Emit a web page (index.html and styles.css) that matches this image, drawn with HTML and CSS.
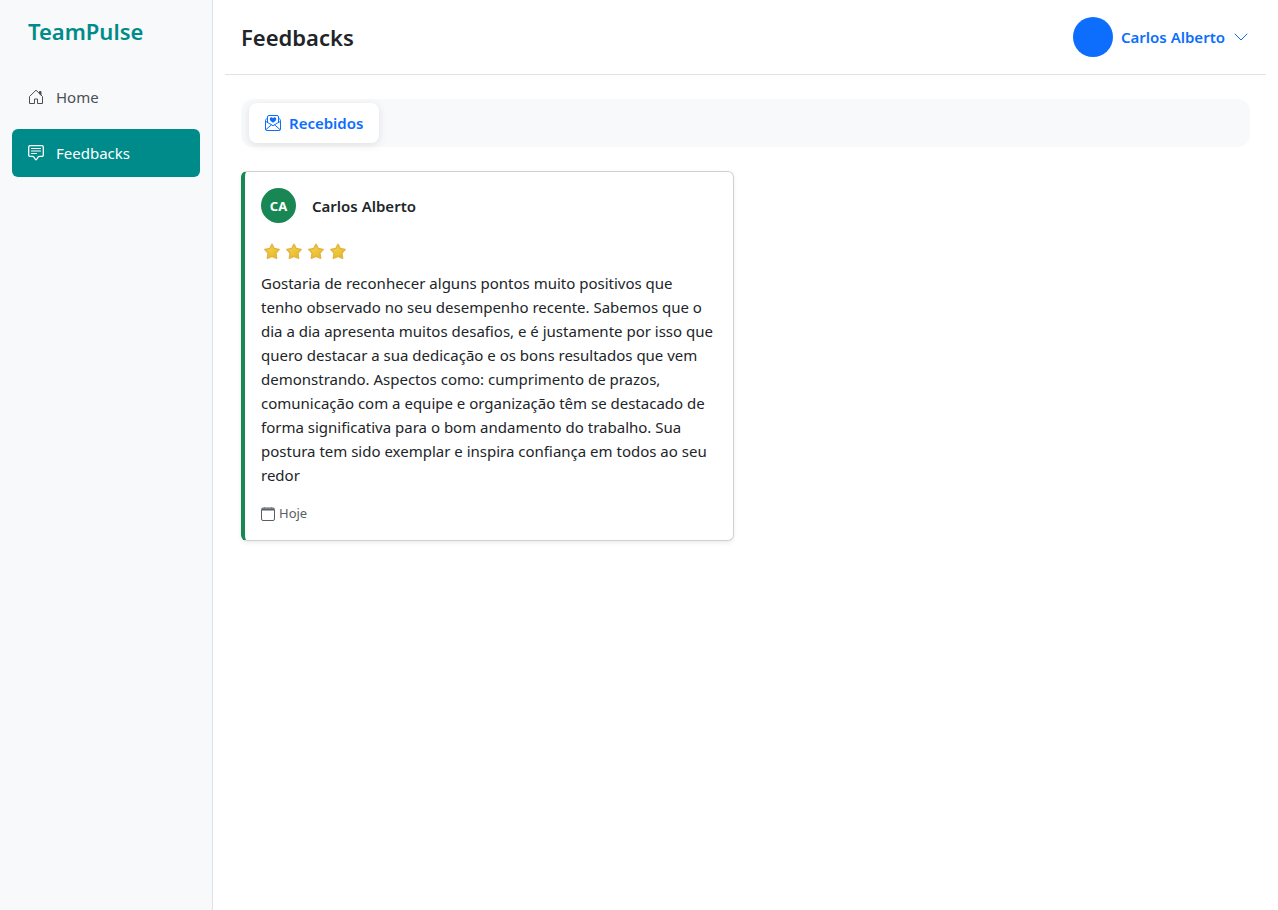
FILE: index.html
```html
<!DOCTYPE html>
<html lang="pt-BR">
<head>
<meta charset="utf-8">
<title>TeamPulse - Feedbacks</title>
<link rel="stylesheet" href="styles.css">
</head>
<body>
<svg class="defs" aria-hidden="true">
  <defs>
    <linearGradient id="gold" x1="0" y1="0" x2="0.6" y2="1">
      <stop offset="0" stop-color="#f9d94f"/>
      <stop offset="1" stop-color="#e6b92e"/>
    </linearGradient>
    <symbol id="star" viewBox="0 0 18 18">
      <path d="M9 2.300 11.200 6.500 16.100 7.400 12.900 11 13.600 16.200 9 14.400 4.400 16.200 5.100 11 1.900 7.400 6.800 6.500Z" fill="url(#gold)" stroke="#e3b440" stroke-width="1.500" stroke-linejoin="round"/>
    </symbol>
  </defs>
</svg>
<div class="app">
  <aside class="sidebar">
    <h1 class="brand">TeamPulse</h1>
    <nav class="menu">
      <a class="menu-link" href="#home">
        <svg class="icon" viewBox="0 0 16 16" fill="none" stroke="currentColor" stroke-linejoin="round"><path d="M1.500 14.500V7.500L8 1.200l6.500 6.300v7h-5V10h-3v4.500Z"/><path d="M11.500 2.500h1.500v3.500l-1.500-1Z" fill="currentColor"/></svg>
        Home
      </a>
      <a class="menu-link active" href="#feedbacks" aria-current="page">
        <svg class="icon" viewBox="0 0 16 16" fill="none" stroke="currentColor" stroke-width="1.300" stroke-linejoin="round" stroke-linecap="round"><path d="M2 .7h12A1.300 1.300 0 0 1 15.300 2v8a1.300 1.300 0 0 1-1.300 1.300h-2.500a1.500 1.500 0 0 0-1.200.6L8.500 14.500a.6.6 0 0 1-1 0L5.700 11.900a1.500 1.500 0 0 0-1.200-.6H2A1.300 1.300 0 0 1 .7 10V2A1.300 1.300 0 0 1 2 .7Z"/><path d="M3.500 3.500h9M3.500 6h9M3.500 8.500h5" stroke-width="1.100"/></svg>
        Feedbacks
      </a>
    </nav>
  </aside>
  <main class="main">
    <header class="topbar">
      <h2 class="title">Feedbacks</h2>
      <button class="user" type="button">
        <span class="user-photo"></span>
        <span>Carlos Alberto</span>
        <svg class="icon" viewBox="0 0 16 16" fill="none" stroke="currentColor" stroke-linecap="round" stroke-linejoin="round"><path d="m2 5 6 6 6-6"/></svg>
      </button>
    </header>
    <div class="content">
      <div class="tabs">
        <button class="tab" type="button">
          <svg class="icon" viewBox="0 0 16 16" fill="none" stroke="currentColor" stroke-linejoin="round"><path d="M2.500 7.500V2A1.500 1.500 0 0 1 4 .5h8A1.500 1.500 0 0 1 13.500 2v5.500M2.500 3.300l-1.200.7a1.500 1.500 0 0 0-.8 1.300V14A1.500 1.500 0 0 0 2 15.500h12a1.500 1.500 0 0 0 1.500-1.500V5.300a1.500 1.500 0 0 0-.8-1.300l-1.200-.7M.5 6.300 8 10.700l7.500-4.400M.8 14.700 6.500 9.800M15.200 14.700 9.500 9.800"/><path d="M8 3.200C9.200 1.500 11.700 2.500 11.200 4.500 10.900 5.800 9.400 6.700 8 7.700 6.600 6.700 5.100 5.800 4.800 4.500 4.300 2.500 6.800 1.500 8 3.200Z" fill="currentColor" stroke="none"/></svg>
          Recebidos
        </button>
      </div>
      <div class="cards">
        <article class="card">
          <div class="author">
            <span class="initials">CA</span>
            <h3 class="author-name">Carlos Alberto</h3>
          </div>
          <div class="stars" role="img" aria-label="4 estrelas">
            <svg class="star"><use href="#star"/></svg>
            <svg class="star"><use href="#star"/></svg>
            <svg class="star"><use href="#star"/></svg>
            <svg class="star"><use href="#star"/></svg>
          </div>
          <p class="message">Gostaria de reconhecer alguns pontos muito positivos que tenho observado no seu desempenho recente. Sabemos que o dia a dia apresenta muitos desafios, e é justamente por isso que quero destacar a sua dedicação e os bons resultados que vem demonstrando. Aspectos como: cumprimento de prazos, comunicação com a equipe e organização têm se destacado de forma significativa para o bom andamento do trabalho. Sua postura tem sido exemplar e inspira confiança em todos ao seu redor</p>
          <div class="date">
            <svg class="date-icon" viewBox="0 0 14 14" fill="none" stroke="currentColor"><rect x=".5" y="1" width="13" height="12.500" rx="1.500"/><path d="M1 2.500h12" stroke-width="2"/><path d="M3.500 0v1.500M10.500 0v1.500" stroke-opacity=".5"/></svg>
            Hoje
          </div>
        </article>
      </div>
    </div>
  </main>
</div>
</body>
</html>
```
FILE: styles.css
```css
* {
  box-sizing: border-box;
}

body {
  margin: 0;
  background: #fff;
  color: #212529;
  font: 15px/24px "Segoe UI", "Noto Sans", sans-serif;
}

h1, h2, h3, p {
  margin: 0;
}

button {
  border: 0;
  background: none;
  font: inherit;
  cursor: pointer;
}

.defs {
  position: absolute;
  width: 0;
  height: 0;
}

.icon {
  width: 16px;
  height: 16px;
  flex: none;
}

.app {
  display: flex;
  min-height: 100vh;
}

.sidebar {
  flex: 0 0 16.667%;
  padding: 16px 12px;
  background: #f8f9fa;
  border-right: 1px solid #dee2e6;
}

.brand {
  padding: 0 16px;
  color: #008b8b;
  font-size: 22px;
  line-height: 30px;
  font-weight: 600;
}

.menu {
  display: grid;
  gap: 8px;
  margin-top: 27px;
}

.menu-link {
  display: flex;
  align-items: center;
  gap: 12px;
  padding: 12px 16px;
  border-radius: 6px;
  color: #495057;
  text-decoration: none;
}

.menu-link.active {
  background: #008b8b;
  color: #fff;
}

.main {
  flex: 1;
  min-width: 0;
  padding: 0 12px;
}

.topbar {
  display: flex;
  align-items: center;
  justify-content: space-between;
  padding: 16px;
  border-bottom: 1px solid #dee2e6;
}

.title {
  font-size: 22px;
  line-height: 42px;
  font-weight: 600;
}

.user {
  display: flex;
  align-items: center;
  gap: 8px;
  padding: 0 1px;
  color: #0d6efd;
  font-weight: 600;
}

.user-photo {
  width: 40px;
  height: 40px;
  border-radius: 50%;
  background: #0d6efd;
}

.content {
  padding: 24px 16px;
}

.tabs {
  display: flex;
  padding: 4px 8px;
  border-radius: 12px;
  background: #f8f9fa;
}

.tab {
  display: flex;
  align-items: center;
  gap: 8px;
  padding: 8px 16px;
  border-radius: 8px;
  background: #fff;
  color: #0d6efd;
  font-weight: 600;
  box-shadow: 0 2px 8px rgba(0, 0, 0, 0.1);
}

.cards {
  display: grid;
  grid-template-columns: repeat(2, 1fr);
  gap: 24px;
  margin-top: 24px;
}

.card {
  padding: 16px;
  border: 1px solid #ced0d2;
  border-left: 4px solid #198754;
  border-radius: 6px;
  box-shadow: 0 2px 4px rgba(0, 0, 0, 0.075);
}

.author {
  display: flex;
  align-items: center;
  gap: 16px;
}

.initials {
  display: grid;
  place-items: center;
  width: 35px;
  height: 35px;
  border-radius: 50%;
  background: #198754;
  color: #fff;
  font-size: 13px;
  font-weight: 700;
}

.author-name {
  font-size: 15px;
  font-weight: 600;
}

.stars {
  display: flex;
  gap: 4px;
  padding: 0 2px;
  margin-top: 19px;
}

.star {
  width: 18px;
  height: 18px;
}

.message {
  margin-top: 11px;
}

.date {
  display: flex;
  align-items: center;
  gap: 4px;
  margin-top: 16px;
  color: #595f64;
  font-size: 13px;
  line-height: 21px;
}

.date-icon {
  width: 14px;
  height: 14px;
}
```
